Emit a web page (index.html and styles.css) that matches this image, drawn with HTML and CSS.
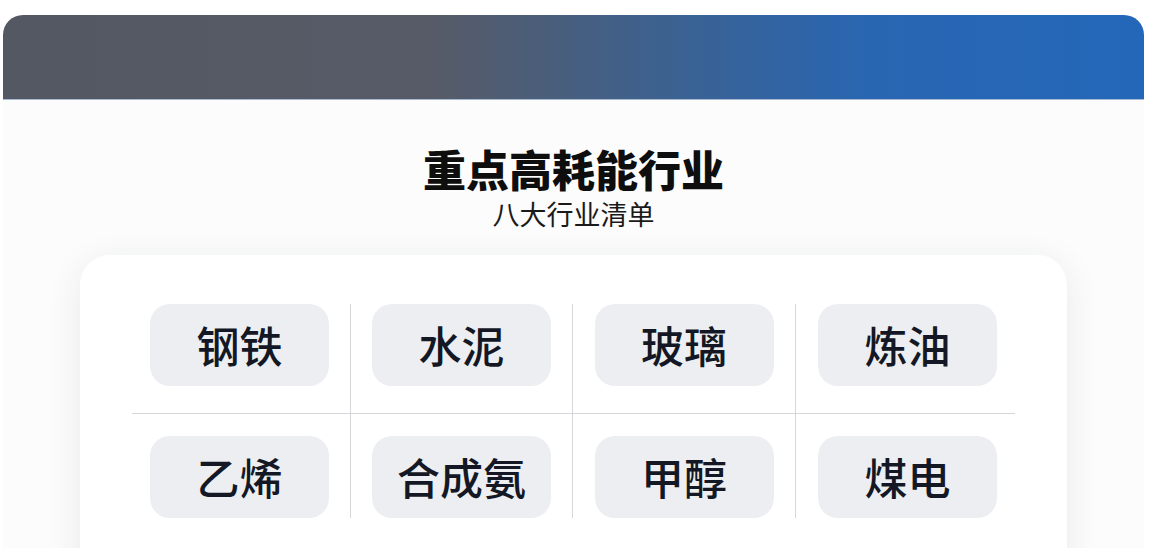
FILE: index.html
```html
<!DOCTYPE html>
<html lang="zh-CN">
<head>
  <meta charset="UTF-8" />
  <meta name="viewport" content="width=device-width, initial-scale=1" />
  <title>重点高耗能行业</title>
  <link rel="stylesheet" href="styles.css">
</head>
<body>
  <div class="panel">
    <header class="banner"></header>

    <main class="content">
      <h1 class="title">重点高耗能行业</h1>
      <p class="subtitle">八大行业清单</p>

      <section class="card">
        <div class="grid">
          <div class="cell top first"><span class="chip">钢铁</span></div>
          <div class="cell top"><span class="chip">水泥</span></div>
          <div class="cell top"><span class="chip">玻璃</span></div>
          <div class="cell top last"><span class="chip">炼油</span></div>
          <div class="cell bottom first"><span class="chip">乙烯</span></div>
          <div class="cell bottom"><span class="chip">合成氨</span></div>
          <div class="cell bottom"><span class="chip">甲醇</span></div>
          <div class="cell bottom last"><span class="chip">煤电</span></div>
        </div>
      </section>
    </main>
  </div>
</body>
</html>
```

FILE: styles.css
```css
* { box-sizing: border-box; }

body {
  margin: 0;
  background: #fff;
  font-family: "Noto Sans CJK SC", "Noto Sans", sans-serif;
  color: #111;
  height: 548px;
  overflow: hidden;
}

.panel {
  margin: 15px 0 0 3px;
  width: 1141px;
  background: #fcfcfc;
  border-radius: 20px 20px 0 0;
}

.banner {
  height: 85px;
  border-radius: 20px 20px 0 0;
  background: linear-gradient(90deg, #545862 0%, #565b67 38%, #3a6294 60%, #2966b2 76%, #2467b9 100%);
  border-bottom: 1px solid #a9bbd2;
}

.content {
  display: flex;
  flex-direction: column;
  align-items: center;
  padding-top: 38px;
}

.title {
  margin: 0;
  font-size: 43px;
  line-height: 60px;
  font-weight: 900;
  color: #0e0e0e;
}

.subtitle {
  margin: 2px 0 0;
  font-size: 27px;
  line-height: 28px;
  font-weight: 400;
  color: #1a1a1a;
}

.card {
  margin-top: 27px;
  align-self: flex-start;
  margin-left: 77px;
  width: 987px;
  background: #fff;
  border-radius: 30px;
  padding: 49px 52px 60px;
  box-shadow: 0 8px 36px rgba(30, 40, 70, 0.09);
}

.grid {
  display: grid;
  grid-template-columns: 219px 222px 223px 219px;
}

.cell {
  display: flex;
  justify-content: center;
  border-right: 1px solid #d4d6da;
}

.cell.first {
  justify-content: flex-start;
  padding-left: 18px;
}

.cell.last {
  border-right: none;
  justify-content: flex-end;
  padding-right: 18px;
}

.cell.top {
  padding-bottom: 27px;
  border-bottom: 1px solid #d4d6da;
}

.cell.bottom { padding-top: 22px; }

.chip {
  width: 179px;
  height: 82px;
  display: flex;
  align-items: center;
  justify-content: center;
  padding-bottom: 3px;
  background: #eceef2;
  border-radius: 20px;
  font-size: 43px;
  font-weight: 500;
  color: #141824;
}
```
